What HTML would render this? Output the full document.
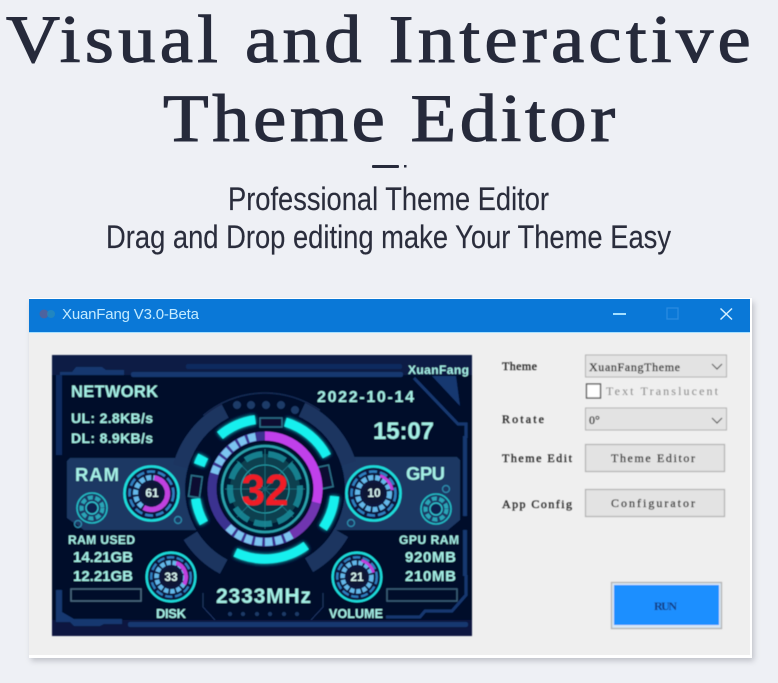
<!DOCTYPE html>
<html><head><meta charset="utf-8"><style>
html,body{margin:0;padding:0;background:#eef0f5}
svg{display:block}
.h{font-family:"Liberation Serif",serif;font-size:68px;fill:#262a3b;stroke:#262a3b;stroke-width:1.05}
.s{font-family:"Liberation Sans",sans-serif;font-size:32px;fill:#2a2d3c;stroke:#2a2d3c;stroke-width:.15}
.m{font-family:"Liberation Serif",serif;font-size:12px;fill:#222;stroke:#222;stroke-width:.3}
.n{font-family:"Liberation Sans",sans-serif;font-weight:bold;fill:#a4f0e6}
</style></head><body>
<svg width="778" height="683" viewBox="0 0 778 683" xmlns="http://www.w3.org/2000/svg">
<defs>
<filter id="b" x="-5%" y="-5%" width="110%" height="110%"><feGaussianBlur stdDeviation="0.5"/></filter>
<filter id="gl" x="-30%" y="-30%" width="160%" height="160%"><feGaussianBlur stdDeviation="2.2" result="x"/><feMerge><feMergeNode in="x"/><feMergeNode in="SourceGraphic"/></feMerge></filter>
<filter id="sh" x="-5%" y="-5%" width="110%" height="110%"><feGaussianBlur stdDeviation="3"/></filter>
<g id="gear">
<circle r="15" fill="none" stroke="#23b9c4" stroke-width="1.6"/>
<circle r="10.5" fill="none" stroke="#2aa6b8" stroke-width="4" stroke-dasharray="5 2.5"/>
<circle r="6" fill="#0c2450" stroke="#30c0cc" stroke-width="1.4"/>
</g>
<g id="ga">
<circle r="27" fill="#07153c" stroke="#1fdcdc" stroke-width="2.6"/>
<circle r="22" fill="none" stroke="#2f7fc0" stroke-width="2.5" stroke-dasharray="8 3"/>
<circle r="16" fill="none" stroke="#63b8ea" stroke-width="5" stroke-dasharray="5 2"/>
<circle r="10.5" fill="#081234"/>
</g>
</defs>
<rect width="778" height="683" fill="#eef0f5"/>
<text class="h" transform="scale(1.1 1)" x="5.45" y="62" textLength="677">Visual and Interactive</text>
<text class="h" transform="scale(1.1 1)" x="148.2" y="141" textLength="411">Theme Editor</text>
<rect x="372" y="165" width="27" height="3" rx="1" fill="#262a3b"/>
<rect x="404" y="165" width="2.5" height="2.5" fill="#262a3b"/>
<text class="s" x="228" y="210" textLength="321" lengthAdjust="spacingAndGlyphs">Professional Theme Editor</text>
<text class="s" x="106" y="248" textLength="565" lengthAdjust="spacingAndGlyphs">Drag and Drop editing make Your Theme Easy</text>

<!-- window -->
<rect x="31" y="302" width="723" height="359" fill="#9a9ca4" opacity=".55" filter="url(#sh)"/>
<rect x="29" y="298" width="723" height="360" fill="#fff"/>
<rect x="29" y="333" width="721" height="322" fill="#efefef"/>
<rect x="29" y="299" width="721" height="33" fill="#0a78d7"/>
<rect x="29" y="332" width="721" height="1" fill="#a8e0ff"/>
<circle cx="44" cy="314" r="4.5" fill="#6a5a88" opacity=".7"/>
<circle cx="51" cy="314" r="4" fill="#2a8cb8" opacity=".7"/>
<text x="62" y="319" font-family="Liberation Sans,sans-serif" font-size="15" fill="#c4ebff" textLength="137">XuanFang V3.0-Beta</text>
<rect x="613" y="313" width="13" height="2" fill="#a4dfff"/>
<rect x="667" y="308" width="11" height="11" fill="none" stroke="#2a8be0" stroke-width="1.3"/>
<path d="M720.5 308.5L732 319.5M732 308.5L720.5 319.5" stroke="#d4f0ff" stroke-width="1.5" fill="none"/>

<!-- screen -->
<g filter="url(#b)">
<rect x="52" y="355" width="420" height="281" fill="#040b2b"/>
<rect x="52" y="355" width="420" height="20" fill="#081a44"/>
<rect x="52" y="620" width="420" height="16" fill="#071840"/>
<path d="M60 375V372H72L76 367H102L106 370H124V375Z" fill="#14376f"/>
<rect x="131" y="372" width="272" height="5" rx="2" fill="#14376f"/>
<rect x="186" y="364" width="216" height="5" rx="2" fill="#102c5e"/>
<path d="M56 375H62V455H56Z" fill="#102c5e"/>
<path d="M56 590V622H70L74 626H100L104 624H122V619H74L62 612V590Z" fill="#14376f"/>
<rect x="128" y="622" width="340" height="5" rx="2" fill="#14376f"/>
<path d="M414 378L458 424H466V438" fill="none" stroke="#14376f" stroke-width="3"/>
<path d="M432 376H456L460 406Z" fill="#14376f"/>
<rect x="463" y="436" width="4" height="80" fill="#14376f"/>
<path d="M466 575V595L452 611H425L420 617H386" fill="none" stroke="#14376f" stroke-width="3"/>
<rect x="463" y="530" width="4" height="46" fill="#14376f"/>
<path d="M67 461L70 458H200V530H84L67 518Z" fill="#1a3763"/>
<path d="M330 457H457L460 460V520L448 530H330Z" fill="#1a3763"/>
<circle cx="265" cy="489" r="86" fill="none" stroke="#1d3660" stroke-width="18" pathLength="360" stroke-dasharray="48 360" transform="rotate(-165 265 489)"/>
<circle cx="265" cy="489" r="86" fill="none" stroke="#1d3660" stroke-width="18" pathLength="360" stroke-dasharray="48 360" transform="rotate(-65 265 489)"/>
<circle cx="265" cy="489" r="80" fill="#040b2b"/>
<circle cx="265" cy="489" r="88" fill="none" stroke="#1d3660" stroke-width="16" pathLength="360" stroke-dasharray="30 360" transform="rotate(30 265 489)"/>
<circle cx="265" cy="489" r="88" fill="none" stroke="#1d3660" stroke-width="16" pathLength="360" stroke-dasharray="30 360" transform="rotate(118 265 489)"/>
<circle cx="265" cy="489" r="96" fill="none" stroke="#152b52" stroke-width="1.5" pathLength="360" stroke-dasharray="75 360" transform="rotate(-130 265 489)"/>
<g fill="#1e3a68"><circle cx="237" cy="405" r="4"/><circle cx="251" cy="405" r="4"/><circle cx="266" cy="405" r="4"/><circle cx="281" cy="405" r="4"/><circle cx="295" cy="410" r="4"/></g>
<g fill="none" stroke="#18f0ee" stroke-width="9" filter="url(#gl)">
<circle cx="265" cy="489" r="70" pathLength="360" stroke-dasharray="32 360" transform="rotate(-130 265 489)"/>
<circle cx="265" cy="489" r="70" pathLength="360" stroke-dasharray="45 360" transform="rotate(-73 265 489)"/>
<circle cx="265" cy="489" r="70" pathLength="360" stroke-dasharray="28 360" transform="rotate(6 265 489)"/>
<circle cx="265" cy="489" r="70" pathLength="360" stroke-dasharray="61 360" transform="rotate(54 265 489)"/>
<circle cx="265" cy="489" r="70" pathLength="360" stroke-dasharray="21 360" transform="rotate(151 265 489)"/>
<circle cx="265" cy="489" r="70" pathLength="360" stroke-dasharray="8 360" transform="rotate(200 265 489)" stroke-width="11"/>
</g>
<g fill="#071030" stroke="#2c6f88" stroke-width="1.5">
<rect x="260" y="418" width="22" height="9"/>
<rect x="320" y="466" width="11" height="22" transform="rotate(-12 325 477)"/>
<rect x="190" y="476" width="11" height="21" transform="rotate(8 195 486)"/>
</g>
<circle cx="265" cy="489" r="53" fill="none" stroke="#3a3090" stroke-width="9"/>
<circle cx="265" cy="489" r="53" fill="none" stroke="#c040ea" stroke-width="9" pathLength="360" stroke-dasharray="105 360" transform="rotate(-90 265 489)"/>
<circle cx="265" cy="489" r="53" fill="none" stroke="#6f35b0" stroke-width="9" pathLength="360" stroke-dasharray="45 360" transform="rotate(15 265 489)"/>
<circle cx="265" cy="489" r="53" fill="none" stroke="#7cc4f0" stroke-width="8" pathLength="360" stroke-dasharray="8 3 8 3 8 3 8 3 8 3 8 3 8 3 0 60 8 3 8 3 8 3 8 3 8 3 8 3 0 200" transform="rotate(60 265 489)"/>
<circle cx="265" cy="489" r="46" fill="#061e34"/>
<circle cx="265" cy="489" r="43" fill="none" stroke="#2aa3ad" stroke-width="2.5"/>
<circle cx="265" cy="489" r="35" fill="#0b3f50"/>
<circle cx="265" cy="489" r="35" fill="none" stroke="#157f8e" stroke-width="6" stroke-dasharray="18 6"/>
<circle cx="265" cy="489" r="24" fill="#0a3444" stroke="#2aa3ad" stroke-width="1"/>
<path d="M265 449V529M225 489H305M237 461L293 517M293 461L237 517" stroke="#1f8996" stroke-width="1" opacity=".6"/>
<text x="265" y="505" text-anchor="middle" font-family="Liberation Sans,sans-serif" font-weight="bold" font-size="44" fill="#f01f26" textLength="47" lengthAdjust="spacingAndGlyphs">32</text>
<use href="#ga" transform="translate(151.5 493.5)"/>
<use href="#ga" transform="translate(373.5 493.5)"/>
<use href="#ga" transform="translate(171 577) scale(.9)"/>
<use href="#ga" transform="translate(357 577) scale(.9)"/>
<g fill="none" stroke="#c040e0" stroke-width="5">
<circle cx="151.5" cy="493.5" r="16" pathLength="360" stroke-dasharray="200 360" transform="rotate(-80 151.5 493.5)"/>
<circle cx="373.5" cy="493.5" r="19" pathLength="360" stroke-dasharray="60 360" transform="rotate(-70 373.5 493.5)" stroke-width="3"/>
<circle cx="171" cy="577" r="15" pathLength="360" stroke-dasharray="100 360" transform="rotate(-70 171 577)" stroke-width="4"/>
<circle cx="357" cy="577" r="17" pathLength="360" stroke-dasharray="60 360" transform="rotate(-75 357 577)" stroke-width="3"/>
</g>
<circle cx="151.5" cy="493.5" r="10.5" fill="#081234"/><circle cx="373.5" cy="493.5" r="10.5" fill="#081234"/>
<use href="#gear" transform="translate(92 508)"/>
<use href="#gear" transform="translate(436 509)"/>
<g fill="none" stroke="#2f8fb0" stroke-width="1.2"><circle cx="78" cy="524" r="3.5"/><circle cx="178" cy="520" r="3.5"/><circle cx="351" cy="523" r="3.5"/><circle cx="446" cy="489" r="3.5"/></g>
<g fill="#d8f6f2" font-family="Liberation Sans,sans-serif" font-weight="bold" font-size="12" text-anchor="middle">
<text x="152" y="497">61</text><text x="374" y="497">10</text><text x="171" y="581">33</text><text x="357" y="581">21</text></g>
<text class="n" x="71" y="397" font-size="16.5" textLength="87">NETWORK</text>
<text class="n" x="71" y="423" font-size="14" textLength="82">UL: 2.8KB/s</text>
<text class="n" x="71" y="443" font-size="14" textLength="82">DL: 8.9KB/s</text>
<text class="n" x="408" y="374" font-size="12" textLength="61">XuanFang</text>
<text class="n" x="317" y="402" font-size="16" textLength="97">2022-10-14</text>
<text class="n" x="373" y="439" font-size="24" textLength="61">15:07</text>
<text class="n" x="75" y="481" font-size="18.5" textLength="44">RAM</text>
<text class="n" x="406" y="480" font-size="18.5" textLength="39">GPU</text>
<text class="n" x="68" y="544" font-size="12" textLength="67">RAM USED</text>
<text class="n" x="73" y="562" font-size="15" textLength="60">14.21GB</text>
<text class="n" x="73" y="581" font-size="15" textLength="60">12.21GB</text>
<text class="n" x="156" y="618" font-size="13" textLength="30">DISK</text>
<text class="n" x="399" y="544" font-size="12" textLength="60">GPU RAM</text>
<text class="n" x="405" y="562" font-size="15" textLength="51">920MB</text>
<text class="n" x="405" y="581" font-size="15" textLength="51">210MB</text>
<text class="n" x="329" y="618" font-size="12.5" textLength="54">VOLUME</text>
<text class="n" x="216" y="603" font-size="21" textLength="95">2333MHz</text>
<g fill="#1e3a68"><circle cx="230" cy="614" r="2"/><circle cx="243" cy="614" r="2"/><circle cx="257" cy="614" r="2"/><circle cx="270" cy="614" r="2"/><circle cx="284" cy="614" r="2"/><circle cx="297" cy="614" r="2"/></g>
<rect x="71" y="589" width="70" height="12" fill="none" stroke="#4a6a80" stroke-width="1.5"/>
<rect x="387" y="589" width="70" height="12" fill="none" stroke="#3a6078" stroke-width="1.5"/>
<path d="M203 593V607L215 620M323 593V607L311 620" fill="none" stroke="#1c3560" stroke-width="1"/>
</g>

<!-- controls -->
<g filter="url(#b)">
<text class="m" x="502" y="370" textLength="35">Theme</text>
<text class="m" x="502" y="423" textLength="42">Rotate</text>
<text class="m" x="502" y="462" textLength="70">Theme Edit</text>
<text class="m" x="502" y="508" textLength="70">App Config</text>
<rect x="585.5" y="355" width="141" height="22" fill="#e3e3e3" stroke="#b4b4b4"/>
<text class="m" x="589" y="371" textLength="91">XuanFangTheme</text>
<path d="M712 364L717 369L722 364" fill="none" stroke="#555" stroke-width="1.2"/>
<rect x="586.5" y="384" width="14" height="14" fill="#fff" stroke="#555" stroke-width="1.3"/>
<text class="m" x="606" y="395" textLength="112" style="fill:#8a8a8a;stroke:none">Text Translucent</text>
<rect x="585.5" y="408" width="141" height="22" fill="#e3e3e3" stroke="#b4b4b4"/>
<text class="m" x="589" y="424">0°</text>
<path d="M712 418L717 423L722 418" fill="none" stroke="#555" stroke-width="1.2"/>
<rect x="585.5" y="444.5" width="139" height="27" fill="#e3e3e3" stroke="#b4b4b4" stroke-width="1.2"/>
<text class="m" x="611" y="462" textLength="84">Theme Editor</text>
<rect x="585.5" y="489.5" width="139" height="27" fill="#e3e3e3" stroke="#b4b4b4" stroke-width="1.2"/>
<text class="m" x="611" y="507" textLength="84">Configurator</text>
<rect x="611.5" y="582.5" width="110" height="46" fill="#d6e6f4" stroke="#b4b4b4" stroke-width="1.3"/>
<rect x="614" y="585" width="105" height="40" fill="#1e8fff"/>
<text x="654" y="610" font-family="Liberation Serif,serif" font-size="12" font-weight="bold" fill="#123a80" textLength="23">RUN</text>
</g>
</svg>
</body></html>
